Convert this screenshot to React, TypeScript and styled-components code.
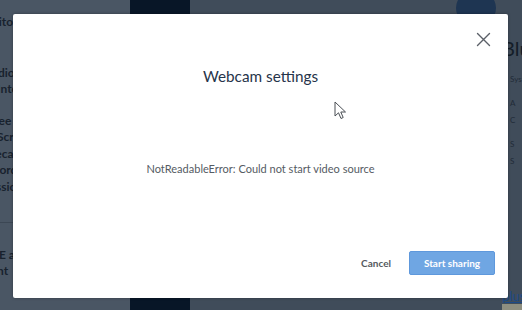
import styled, { createGlobalStyle } from 'styled-components';

const GlobalStyle = createGlobalStyle`
  html, body {
    margin: 0;
    padding: 0;
  }
  body {
    font-family: 'Lato', 'Liberation Sans', sans-serif;
    overflow: hidden;
  }
`;

// dimmed page behind the dialog
const Page = styled.div`
  position: relative;
  display: flex;
  width: 522px;
  height: 310px;
  overflow: hidden;
  background: #414d5b;
`;

const LeftPanel = styled.div`
  width: 130px;
  padding-top: 14px;
  display: flex;
  flex-direction: column;
  background: #4a5664;
  color: #18222e;
  font-size: 12px;
  font-weight: 700;
  overflow: hidden;
`;

const PanelGroup = styled.div<{ $after?: number }>`
  display: flex;
  flex-direction: column;
  margin-bottom: ${(p) => p.$after ?? 0}px;
`;

const PanelLine = styled.div<{ $shift: number }>`
  margin-left: ${(p) => p.$shift}px;
  line-height: 16.5px;
  white-space: nowrap;
`;

const PanelRule = styled.div`
  margin: 10px 0 24px;
  border-top: 1px solid #3c4754;
`;

const DarkColumn = styled.div`
  width: 60px;
  background: #081627;
`;

const RightArea = styled.div`
  flex: 1;
  display: flex;
  flex-direction: column;
  align-items: flex-start;
  padding-left: 312px;
  background: #404c5a;
  color: #202b38;
  overflow: hidden;
`;

const Avatar = styled.div`
  margin: -10px 0 0 -46px;
  width: 40px;
  height: 36px;
  border-radius: 50%;
  background: #1e3552;
`;

const BigName = styled.div`
  margin-top: 10px;
  font-size: 20px;
  color: #141d28;
  white-space: nowrap;
`;

const NoteGroup = styled.div`
  display: flex;
  flex-direction: column;
  gap: 7px;
  padding-left: 8px;
  margin-top: 14px;
  font-size: 8px;
  white-space: nowrap;
`;

const BottomRow = styled.div`
  margin-top: auto;
  display: flex;
  flex-direction: column;
`;

const BottomLink = styled.div`
  font-size: 13px;
  color: #1d4a86;
  text-decoration: underline;
`;

const Chip = styled.div`
  width: 20px;
  height: 6px;
  background: #8e8e80;
`;

const Overlay = styled.div`
  position: absolute;
  inset: 0;
  padding: 14px 14px 12px 13px;
  display: flex;
`;

const Modal = styled.div`
  position: relative;
  flex: 1;
  display: flex;
  flex-direction: column;
  background: #ffffff;
  border-radius: 2px;
  box-shadow: 0 0 3px rgba(0, 0, 0, 0.35);
`;

const CloseButton = styled.button`
  position: absolute;
  top: 18px;
  right: 17px;
  width: 15px;
  height: 15px;
  padding: 0;
  border: none;
  background: none;
  cursor: pointer;
`;

const Title = styled.h2`
  margin: 52px 0 0;
  text-align: center;
  font-size: 15.3px;
  line-height: 20px;
  font-weight: 400;
  color: #26344a;
`;

const Message = styled.p`
  margin: 75px 0 0;
  text-align: center;
  font-size: 11px;
  line-height: 16px;
  color: #555b63;
`;

const Footer = styled.div`
  margin-top: auto;
  padding: 0 13px 23px;
  display: flex;
  justify-content: flex-end;
  align-items: center;
  gap: 18px;
`;

const TextButton = styled.button`
  border: none;
  background: none;
  padding: 0;
  font-family: inherit;
  font-size: 10px;
  font-weight: 700;
  color: #555a60;
`;

const PrimaryButton = styled.button`
  width: 86px;
  height: 24px;
  border: 1px solid #5e98dc;
  border-radius: 2px;
  background: #6fa6e3;
  color: #ffffff;
  font-family: inherit;
  font-size: 10px;
  font-weight: 700;
`;

const Pointer = styled.svg`
  position: absolute;
  left: 334px;
  top: 101px;
`;

export default function App() {
  return (
    <>
      <GlobalStyle />
      <Page>
        <LeftPanel>
          <PanelGroup $after={34}>
            <PanelLine $shift={-26}>Monitor</PanelLine>
          </PanelGroup>
          <PanelGroup $after={15}>
            <PanelLine $shift={-17}>Audio</PanelLine>
            <PanelLine $shift={-3}>Interview</PanelLine>
          </PanelGroup>
          <PanelGroup>
            <PanelLine $shift={-8}>See</PanelLine>
            <PanelLine $shift={-3}>Screen</PanelLine>
            <PanelLine $shift={-12}>Recall</PanelLine>
            <PanelLine $shift={-20}>Recording</PanelLine>
            <PanelLine $shift={-17}>Session</PanelLine>
            <PanelLine $shift={-3}>.</PanelLine>
          </PanelGroup>
          <PanelRule />
          <PanelGroup>
            <PanelLine $shift={-1}>E app</PanelLine>
            <PanelLine $shift={-20}>Right</PanelLine>
          </PanelGroup>
        </LeftPanel>
        <DarkColumn />
        <RightArea>
          <Avatar />
          <BigName>Blue</BigName>
          <NoteGroup>
            <span>System</span>
          </NoteGroup>
          <NoteGroup>
            <span>A</span>
            <span>C</span>
          </NoteGroup>
          <NoteGroup>
            <span>S</span>
            <span>S</span>
          </NoteGroup>
          <BottomRow>
            <BottomLink>plus</BottomLink>
            <Chip />
          </BottomRow>
        </RightArea>

        <Overlay>
          <Modal>
            <CloseButton aria-label="Close">
              <svg width="15" height="15" viewBox="0 0 15 15">
                <path d="M1.5 1.5 L13.5 13.5 M13.5 1.5 L1.5 13.5" stroke="#5b6068" strokeWidth="1.4" strokeLinecap="round" />
              </svg>
            </CloseButton>
            <Title>Webcam settings</Title>
            <Message>NotReadableError: Could not start video source</Message>
            <Footer>
              <TextButton>Cancel</TextButton>
              <PrimaryButton>Start sharing</PrimaryButton>
            </Footer>
          </Modal>
        </Overlay>

        <Pointer width="13" height="19" viewBox="0 0 13 19">
          <path
            d="M1 1 L1 15 L4.5 11.8 L7 17.5 L9.2 16.5 L6.8 11 L11.5 11 Z"
            fill="#ffffff"
            stroke="#4a4f55"
            strokeWidth="1"
            strokeLinejoin="round"
          />
        </Pointer>
      </Page>
    </>
  );
}
